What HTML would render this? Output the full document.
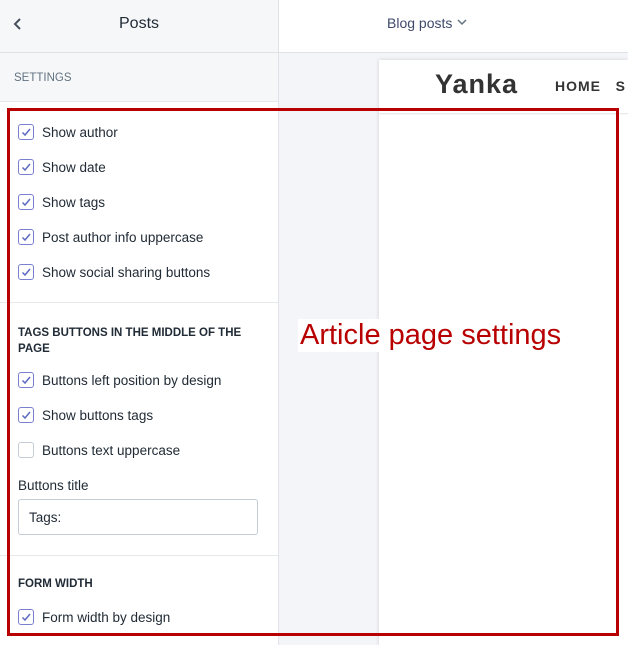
<!DOCTYPE html><html><head><style>
body{margin:0;width:628px;height:645px;overflow:hidden;font-family:"Liberation Sans",sans-serif;background:#f4f5f8;position:relative}
.a{position:absolute}
.side{left:0;top:0;width:278px;height:645px;background:#fff;border-right:1px solid #e1e3e8}
.t{font-size:13.5px;color:#212b36;white-space:nowrap}
.cb{position:absolute;left:18px;width:14px;height:14px;border:1px solid #7a7fcf;border-radius:3px;background:#fff}
.cb.off{border-color:#c4cdd5}
.cb svg{position:absolute;left:1px;top:1px}
.h{font-size:11.5px;color:#212b36;font-weight:bold}
</style></head><body>
<div class="a side"></div>
<div class="a" style="left:0;top:0;width:278px;height:52px;background:#f6f7f9;border-bottom:1px solid #dfe3e8"></div>
<div class="a" style="left:279px;top:0;width:349px;height:52px;background:#fff;border-bottom:1px solid #dfe3e8"></div>
<svg class="a" style="left:12px;top:17px" width="12" height="14"><path d="M8 2L3 7l5 5" stroke="#454f5b" stroke-width="2" fill="none"/></svg>
<div class="a" style="left:119px;top:15px;font-size:16px;color:#212b36">Posts</div>
<div class="a" style="left:0;top:53px;width:278px;height:48px;background:#f6f7f9;border-bottom:1px solid #e6e8eb"></div>
<div class="a" style="left:14px;top:72px;font-size:11.5px;color:#637381">SETTINGS</div>
<div class="a t" style="left:387px;top:15px;font-size:14px;color:#3f4a6b">Blog posts</div>
<svg class="a" style="left:456px;top:17px" width="12" height="10"><path d="M2 3l4 4 4-4" stroke="#637381" stroke-width="1.5" fill="none"/></svg>
<div class="a" style="left:379px;top:60px;width:249px;height:585px;background:#fff;box-shadow:0 0 4px rgba(0,0,0,.15)"></div>
<div class="a" style="left:379px;top:113px;width:249px;height:2px;background:linear-gradient(#e3e3e3,#fff)"></div>
<div class="a" style="left:435px;top:69px;font-size:27px;font-weight:bold;color:#333;letter-spacing:1px">Yanka</div>
<div class="a" style="left:555px;top:78px;font-size:14px;font-weight:bold;color:#333;letter-spacing:1px">HOME&nbsp;&nbsp;&nbsp;S</div>

<div class="cb" style="top:124px"><svg width="12" height="12"><path d="M2.5 6.5l2.5 2.5 5-6" stroke="#5c6ac4" stroke-width="1.5" fill="none"/></svg></div>
<div class="a t" style="left:42px;top:125px">Show author</div>
<div class="cb" style="top:159px"><svg width="12" height="12"><path d="M2.5 6.5l2.5 2.5 5-6" stroke="#5c6ac4" stroke-width="1.5" fill="none"/></svg></div>
<div class="a t" style="left:42px;top:160px">Show date</div>
<div class="cb" style="top:194px"><svg width="12" height="12"><path d="M2.5 6.5l2.5 2.5 5-6" stroke="#5c6ac4" stroke-width="1.5" fill="none"/></svg></div>
<div class="a t" style="left:42px;top:195px">Show tags</div>
<div class="cb" style="top:229px"><svg width="12" height="12"><path d="M2.5 6.5l2.5 2.5 5-6" stroke="#5c6ac4" stroke-width="1.5" fill="none"/></svg></div>
<div class="a t" style="left:42px;top:230px">Post author info uppercase</div>
<div class="cb" style="top:264px"><svg width="12" height="12"><path d="M2.5 6.5l2.5 2.5 5-6" stroke="#5c6ac4" stroke-width="1.5" fill="none"/></svg></div>
<div class="a t" style="left:42px;top:265px">Show social sharing buttons</div>
<div class="a" style="left:0;top:302px;width:278px;height:1px;background:#e6e8eb"></div>
<div class="a h" style="left:18px;top:325px;line-height:16px;width:240px">TAGS BUTTONS IN THE MIDDLE OF THE PAGE</div>
<div class="cb" style="top:372px"><svg width="12" height="12"><path d="M2.5 6.5l2.5 2.5 5-6" stroke="#5c6ac4" stroke-width="1.5" fill="none"/></svg></div>
<div class="a t" style="left:42px;top:373px">Buttons left position by design</div>
<div class="cb" style="top:407px"><svg width="12" height="12"><path d="M2.5 6.5l2.5 2.5 5-6" stroke="#5c6ac4" stroke-width="1.5" fill="none"/></svg></div>
<div class="a t" style="left:42px;top:408px">Show buttons tags</div>
<div class="cb off" style="top:442px"></div>
<div class="a t" style="left:42px;top:443px">Buttons text uppercase</div>
<div class="a t" style="left:18px;top:478px">Buttons title</div>
<div class="a" style="left:18px;top:499px;width:238px;height:34px;border:1px solid #c4cdd5;border-radius:3px;background:#fff"></div>
<div class="a t" style="left:29px;top:510px">Tags:</div>
<div class="a" style="left:0;top:555px;width:278px;height:1px;background:#e6e8eb"></div>
<div class="a h" style="left:18px;top:578px">FORM WIDTH</div>
<div class="cb" style="top:609px"><svg width="12" height="12"><path d="M2.5 6.5l2.5 2.5 5-6" stroke="#5c6ac4" stroke-width="1.5" fill="none"/></svg></div>
<div class="a t" style="left:42px;top:610px">Form width by design</div>

<div class="a" style="left:7px;top:108px;width:606px;height:522px;border:3px solid #b80000"></div>
<div class="a" style="left:298px;top:319px;font-size:29px;color:#b80000;background:#fff;padding:0 2px">Article page settings</div>
</body></html>
